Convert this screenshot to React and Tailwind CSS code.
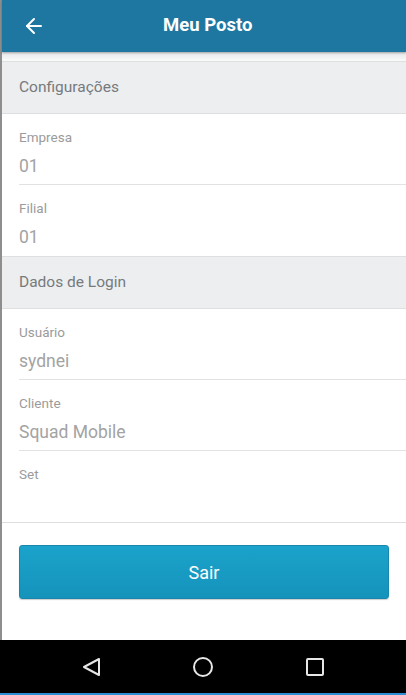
import { ArrowLeft } from 'lucide-react';

const Section = ({ title }) => (
  <div className="flex h-[53px] items-center border-y border-[#dedfe1] bg-[#eceef0] px-[17px]">
    <span className="text-[15.5px] text-[#777a7d]">{title}</span>
  </div>
);

const Field = ({ label, value, last }) => (
  <div className="flex h-[71px] flex-col pl-[17px]">
    <div
      className={`flex h-full flex-col ${last ? '' : 'border-b border-[#e2e2e2]'}`}
    >
      <span className="mt-[14px] text-[13.5px] leading-[18px] text-[#9b9b9b]">{label}</span>
      <span className="mt-[9px] text-[17.5px] leading-[22px] text-[#a3a3a3]">{value}</span>
    </div>
  </div>
);

export default function App() {
  return (
    <div className="flex h-[695px] w-[406px] flex-col bg-white font-['Roboto',sans-serif]">
      <div className="flex flex-1 flex-col border-l-2 border-[#8e8e8e]">
        <header className="relative flex h-[52px] items-center bg-[#1e77a1] shadow-[0_1px_2px_rgba(0,0,0,0.3)]">
          <ArrowLeft className="ml-[20px] h-[24px] w-[24px] text-white" strokeWidth={2} />
          <h1 className="absolute left-[161px] text-[18.5px] font-bold text-white">Meu Posto</h1>
        </header>
        <div className="h-[9px] bg-gradient-to-b from-[#e4e6e8] to-[#fafafa]" />
        <Section title="Configurações" />
        <Field label="Empresa" value="01" />
        <Field label="Filial" value="01" last />
        <Section title="Dados de Login" />
        <Field label="Usuário" value="sydnei" />
        <Field label="Cliente" value="Squad Mobile" />
        <Field label="Set" value="" last />
        <div className="border-t border-[#dedede] px-[17px] pt-[22px]">
          <button className="flex h-[54px] w-full items-center justify-center rounded-[3px] border border-[#1787ad] bg-gradient-to-b from-[#1ba3cb] to-[#1593bb] text-[18px] text-white shadow-[0_1px_1px_rgba(0,0,0,0.2)]">
            Sair
          </button>
        </div>
      </div>
      <nav className="flex h-[55px] items-center justify-between border-b-2 border-[#2b8fd6] bg-black px-[80px]">
        <svg width="22" height="22" viewBox="0 0 22 22" fill="none" stroke="#e6e6e6" strokeWidth="2" strokeLinejoin="round">
          <path d="M19 3 L4 11 L19 19 Z" />
        </svg>
        <svg width="22" height="22" viewBox="0 0 22 22" fill="none" stroke="#e6e6e6" strokeWidth="2">
          <circle cx="11" cy="11" r="9" />
        </svg>
        <svg width="22" height="22" viewBox="0 0 22 22" fill="none" stroke="#e6e6e6" strokeWidth="2">
          <rect x="3" y="3" width="16" height="16" rx="1" />
        </svg>
      </nav>
    </div>
  );
}
